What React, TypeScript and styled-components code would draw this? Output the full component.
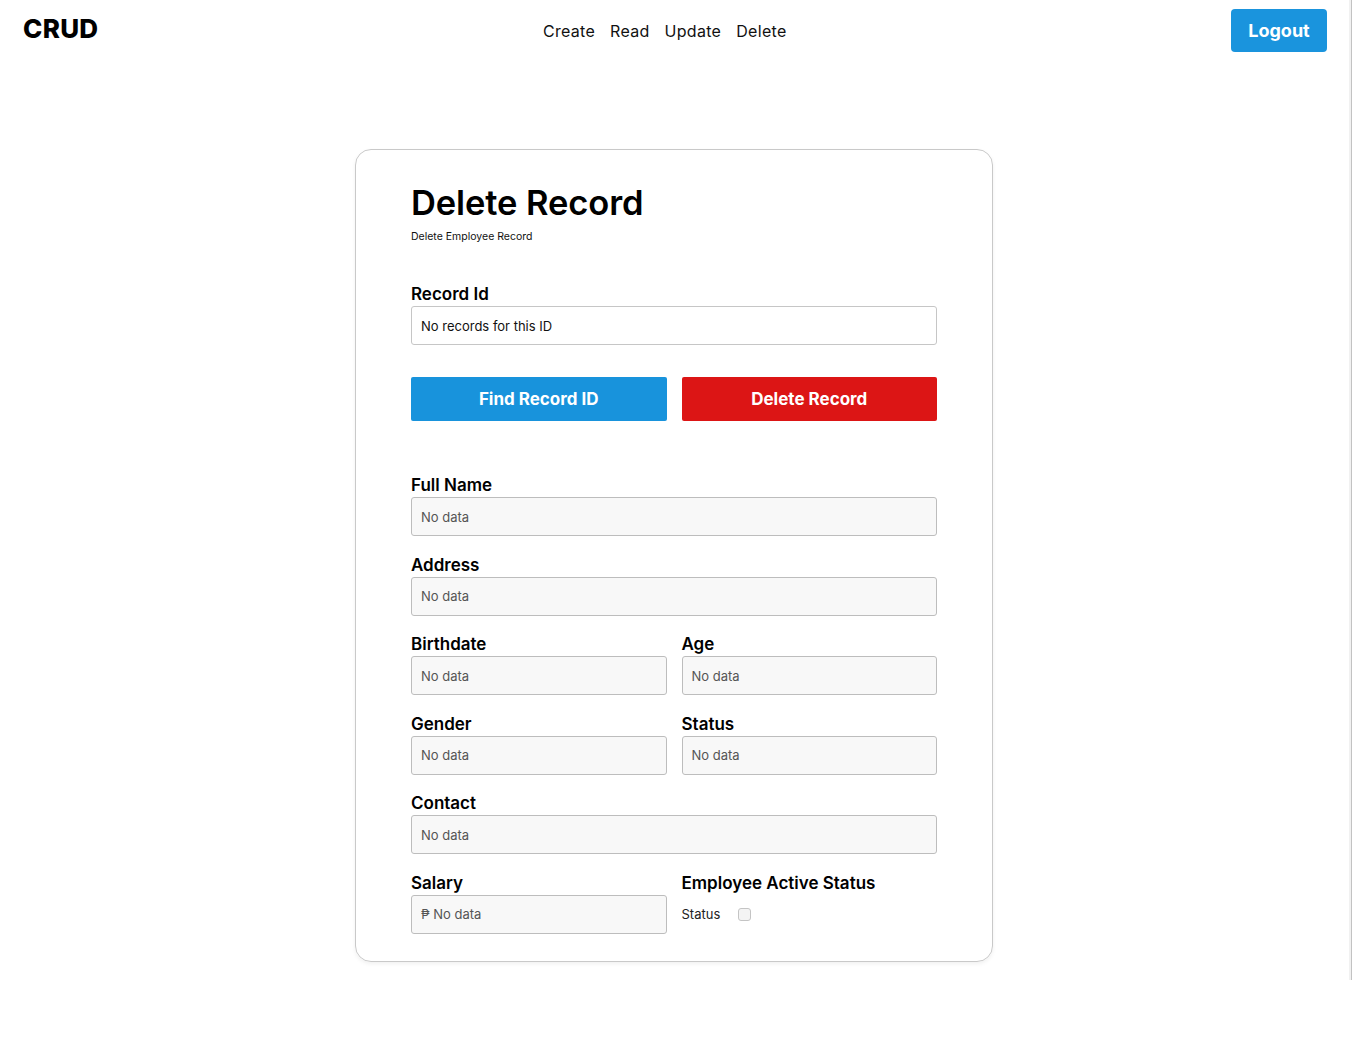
import React from "react";
import styled, { createGlobalStyle } from "styled-components";

const Global = createGlobalStyle`
  html, body { margin: 0; padding: 0; background: #ffffff; }
  body { font-family: Inter, "Open Sans", "Liberation Sans", sans-serif; color: #000; }
  * { box-sizing: border-box; }
`;

const Page = styled.div`
  min-height: 1052px;
  display: flex;
  flex-direction: column;
  align-items: center;
  padding-right: 4px;
`;

const Header = styled.header`
  width: 100%;
  height: 61px;
  display: flex;
  justify-content: space-between;
  align-items: center;
  padding: 0 21px 0 23px;
`;

const Brand = styled.div`
  font-size: 26px;
  font-weight: 800;
  letter-spacing: 0.3px;
  margin-top: -4px;
`;

const Nav = styled.nav`
  display: flex;
  gap: 15px;
`;

const NavLink = styled.a`
  font-size: 16px;
  letter-spacing: 0.3px;
  color: #111;
  text-decoration: none;
  cursor: pointer;
`;

const LogoutButton = styled.button`
  width: 96px;
  height: 43px;
  border: none;
  border-radius: 4px;
  background: #1a94dd;
  color: #fff;
  font-family: inherit;
  font-size: 18px;
  font-weight: 700;
  margin-top: -1px;
`;

const Card = styled.section`
  margin-top: 88px;
  width: 638px;
  border: 1px solid #c9c9c9;
  border-radius: 16px;
  box-shadow: 0 2px 4px rgba(0, 0, 0, 0.06);
  padding: 30px 55px 27px 55px;
`;

const Title = styled.h1`
  margin: 0;
  font-size: 34.5px;
  font-weight: 600;
  letter-spacing: -0.1px;
  line-height: 46px;
`;

const Subtitle = styled.p`
  margin: 4px 0 0;
  font-size: 10.5px;
  line-height: 14px;
  color: #111;
`;

const Form = styled.div`
  display: grid;
  grid-template-columns: 1fr 1fr;
  column-gap: 15px;
  row-gap: 18.6px;
`;

const Field = styled.div<{ $span?: boolean }>`
  display: flex;
  flex-direction: column;
  gap: 1px;
  grid-column: ${(p) => (p.$span ? "1 / -1" : "auto")};
`;

const Label = styled.label`
  font-size: 17px;
  font-weight: 600;
  line-height: 21px;
`;

const Input = styled.div<{ $muted?: boolean }>`
  height: 39px;
  border: 1px solid ${(p) => (p.$muted ? "#bdbdbd" : "#c6c6c6")};
  border-radius: 3px;
  background: ${(p) => (p.$muted ? "#f8f8f8" : "#ffffff")};
  display: flex;
  align-items: center;
  padding: 0 9px;
  font-size: 13px;
  color: ${(p) => (p.$muted ? "#555" : "#111")};
`;

const IdSection = styled.div`
  margin-top: 40px;
`;

const Buttons = styled.div`
  display: grid;
  grid-template-columns: 1fr 1fr;
  column-gap: 15px;
  margin: 32px 0 54px;
`;

const ActionButton = styled.button<{ $tone: "blue" | "red" }>`
  height: 44px;
  border: none;
  border-radius: 2px;
  background: ${(p) => (p.$tone === "blue" ? "#1893dc" : "#dc1515")};
  color: #fff;
  font-family: inherit;
  font-size: 17px;
  font-weight: 700;
`;

const CheckRow = styled.div`
  height: 39px;
  display: flex;
  align-items: center;
  gap: 18px;
  font-size: 13px;
  color: #222;
`;

const Checkbox = styled.span`
  width: 13px;
  height: 13px;
  border: 1px solid #c4c4c4;
  border-radius: 3px;
  background: #f4f4f4;
`;

const ScrollTrack = styled.div`
  position: fixed;
  top: 0;
  right: 0;
  width: 3px;
  height: 980px;
  background: #f1f1f1;
  border-right: 1px solid #c2c2c2;
`;

const fields: { label: string; span?: boolean; value?: string }[] = [
  { label: "Full Name", span: true },
  { label: "Address", span: true },
  { label: "Birthdate" },
  { label: "Age" },
  { label: "Gender" },
  { label: "Status" },
  { label: "Contact", span: true },
  { label: "Salary", value: "₱ No data" },
];

export default function App() {
  return (
    <Page>
      <Global />
      <Header>
        <Brand>CRUD</Brand>
        <Nav>
          <NavLink>Create</NavLink>
          <NavLink>Read</NavLink>
          <NavLink>Update</NavLink>
          <NavLink>Delete</NavLink>
        </Nav>
        <LogoutButton>Logout</LogoutButton>
      </Header>
      <Card>
        <Title>Delete Record</Title>
        <Subtitle>Delete Employee Record</Subtitle>
        <IdSection>
          <Field>
            <Label>Record Id</Label>
            <Input>No records for this ID</Input>
          </Field>
        </IdSection>
        <Buttons>
          <ActionButton $tone="blue">Find Record ID</ActionButton>
          <ActionButton $tone="red">Delete Record</ActionButton>
        </Buttons>
        <Form>
          {fields.map((f) => (
            <Field key={f.label} $span={f.span}>
              <Label>{f.label}</Label>
              <Input $muted>{f.value ?? "No data"}</Input>
            </Field>
          ))}
          <Field>
            <Label>Employee Active Status</Label>
            <CheckRow>
              Status
              <Checkbox />
            </CheckRow>
          </Field>
        </Form>
      </Card>
      <ScrollTrack />
    </Page>
  );
}
